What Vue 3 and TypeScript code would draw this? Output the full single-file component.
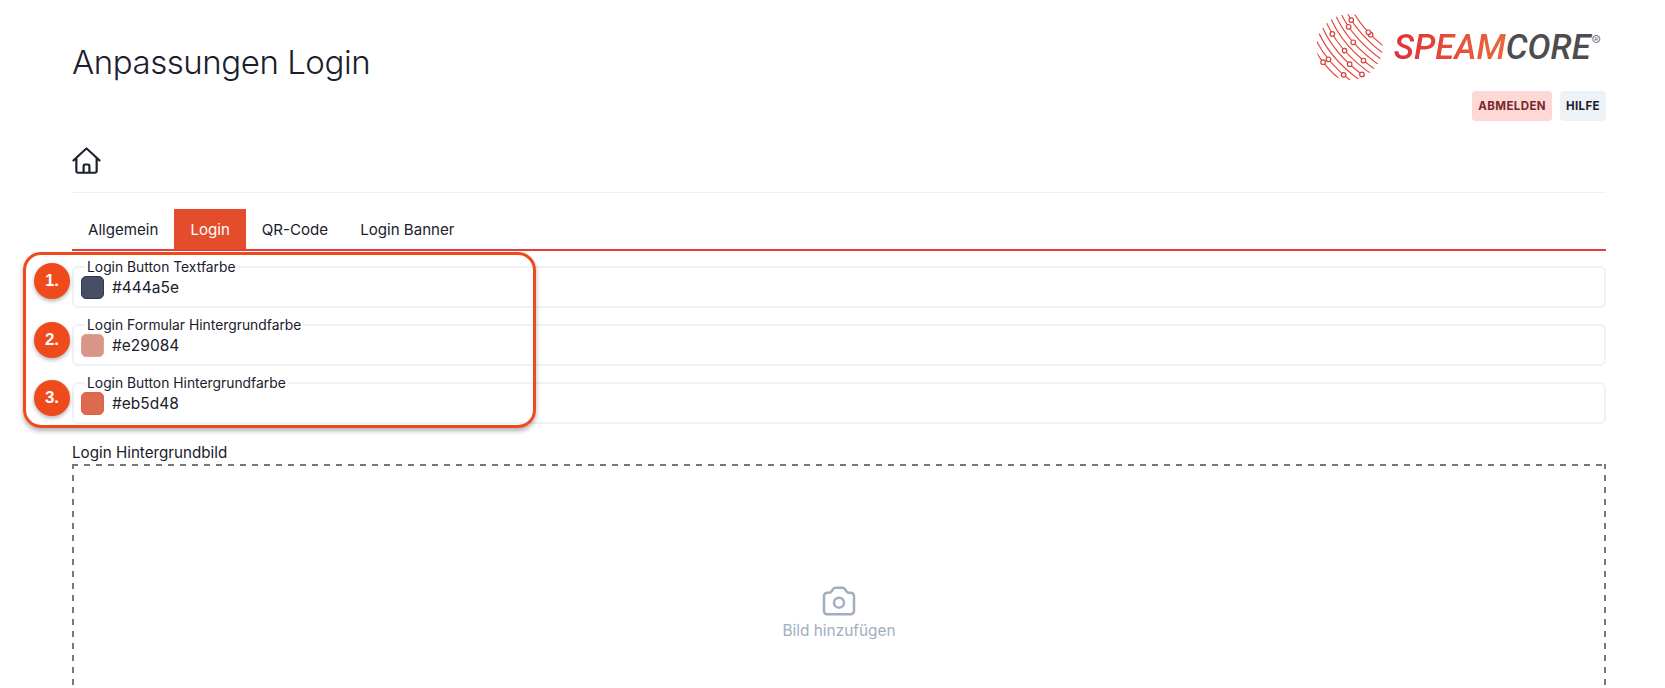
<template>
  <div class="page">
    <header class="top">
      <h1>Anpassungen Login</h1>
      <div class="top-right">
        <div class="logo">
          <svg class="globe" width="71" height="66" viewBox="0 0 71 66" fill="none">
            <defs>
              <clipPath id="globe-clip"><circle cx="35.5" cy="33" r="33" /></clipPath>
            </defs>
            <g clip-path="url(#globe-clip)" stroke="#e0493c" stroke-width="1.15">
              <path v-for="(line, i) in globeLines" :key="i" :d="toPath(line)" />
            </g>
            <circle
              v-for="(n, i) in globeNodes"
              :key="'n' + i"
              :cx="n[0]"
              :cy="n[1]"
              r="2.3"
              fill="#fff"
              stroke="#d9403a"
              stroke-width="1.2"
            />
          </svg>
          <span class="brand"><span class="brand-red">SPEAM</span><span class="brand-grey">CORE</span></span>
          <span class="reg">®</span>
        </div>
        <div class="actions">
          <a class="btn btn-red">ABMELDEN</a>
          <a class="btn btn-grey">HILFE</a>
        </div>
      </div>
    </header>

    <nav class="crumbs">
      <svg width="29" height="27" viewBox="2 2 20 20" preserveAspectRatio="none" fill="none" stroke="#1a202c" stroke-width="1.5" stroke-linecap="round" stroke-linejoin="round">
        <path d="M3 12l2-2m0 0l7-7 7 7M5 10v10a1 1 0 001 1h3m10-11l2 2m-2-2v10a1 1 0 01-1 1h-3m-6 0a1 1 0 001-1v-4a1 1 0 011-1h2a1 1 0 011 1v4a1 1 0 001 1m-6 0h6" />
      </svg>
    </nav>

    <div class="tabs">
      <div v-for="tab in tabs" :key="tab" class="tab" :class="{ active: tab === 'Login' }">{{ tab }}</div>
    </div>

    <div class="fields">
      <fieldset v-for="field in fields" :key="field.label" class="field">
        <legend>{{ field.label }}</legend>
        <div class="color-row">
          <span class="swatch" :style="{ backgroundColor: field.swatch, borderColor: field.edge }"></span>
          <span class="hex">{{ field.value }}</span>
        </div>
      </fieldset>

      <div class="callout"></div>
      <span v-for="(field, i) in fields" :key="'b' + i" class="badge" :class="'badge-' + (i + 1)">{{ i + 1 }}.</span>
    </div>

    <div class="upload-label">Login Hintergrundbild</div>
    <div class="upload">
      <svg width="40" height="40" viewBox="0 0 24 24" fill="none" stroke="#a0aec0" stroke-width="1.5" stroke-linecap="round" stroke-linejoin="round">
        <path d="M3 9a2 2 0 012-2h.93a2 2 0 001.664-.89l.812-1.22A2 2 0 0110.07 4h3.86a2 2 0 011.664.89l.812 1.22A2 2 0 0018.07 7H19a2 2 0 012 2v9a2 2 0 01-2 2H5a2 2 0 01-2-2V9z" />
        <path d="M15 13a3 3 0 11-6 0 3 3 0 016 0z" />
      </svg>
      <span class="upload-text">Bild hinzufügen</span>
    </div>
  </div>
</template>

<script setup lang="ts">
const tabs = ['Allgemein', 'Login', 'QR-Code', 'Login Banner']

const fields = [
  { label: 'Login Button Textfarbe', value: '#444a5e', swatch: '#484e63', edge: '#2f3654' },
  { label: 'Login Formular Hintergrundfarbe', value: '#e29084', swatch: '#d99686', edge: '#e0a294' },
  { label: 'Login Button Hintergrundfarbe', value: '#eb5d48', swatch: '#dc6a50', edge: '#e8603c' }
]

// parallel curves of the globe, clipped to a circle
const globeLines = Array.from({ length: 11 }, (_, i) => {
  const o = -28 + i * 6
  const dx = o * 0.72
  const dy = o * -0.69
  return [8 + dx, 2 + dy, 20 + dx, 38 + dy, 60 + dx, 64 + dy]
})

const toPath = (l: number[]) => `M${l[0]} ${l[1]}Q${l[2]} ${l[3]} ${l[4]} ${l[5]}`

// move a node onto the closest curve so it sits on a line
const snap = (x: number, y: number) => {
  let best = [x, y]
  let bestDist = Infinity
  for (const l of globeLines) {
    for (let t = 0; t <= 1; t += 0.02) {
      const u = 1 - t
      const px = u * u * l[0] + 2 * u * t * l[2] + t * t * l[4]
      const py = u * u * l[1] + 2 * u * t * l[3] + t * t * l[5]
      const dist = (px - x) ** 2 + (py - y) ** 2
      if (dist < bestDist) {
        bestDist = dist
        best = [px, py]
      }
    }
  }
  return best
}

const globeNodes = [
  [39, 5], [34, 14], [63, 15], [53, 20], [19, 20], [40, 27],
  [30, 38], [51, 44], [35, 50], [17, 44], [7, 49], [31, 60], [48, 59]
].map(n => snap(n[0], n[1]))
</script>

<style scoped>
.page {
  height: 688px;
  overflow: hidden;
  box-sizing: border-box;
  padding: 14px 59px 0 72px;
  background: #fff;
  color: #1a202c;
  font-family: Inter, "Liberation Sans", sans-serif;
}

.top {
  display: flex;
  justify-content: space-between;
  align-items: flex-start;
}

h1 {
  margin: 28px 0 0;
  font-size: 33px;
  line-height: 40px;
  font-weight: 300;
  letter-spacing: -0.45px;
}

.top-right {
  display: flex;
  flex-direction: column;
  align-items: flex-end;
  gap: 11px;
}

.logo {
  display: flex;
  align-items: center;
  height: 66px;
  margin-right: 5px;
}

.brand {
  margin-left: 9px;
  font-family: Roboto, sans-serif;
  font-size: 34.5px;
  font-weight: 500;
  font-style: italic;
  line-height: 1;
}

.brand-red {
  background: linear-gradient(90deg, #df3038, #e8683c);
  -webkit-background-clip: text;
  background-clip: text;
  color: transparent;
}

.brand-grey {
  color: #4d4d4f;
}

.reg {
  align-self: flex-start;
  margin: 19px 0 0 1px;
  font-size: 14px;
  line-height: 16px;
  color: #777;
}

.actions {
  display: flex;
  gap: 8px;
}

.btn {
  display: flex;
  align-items: center;
  height: 30px;
  padding: 0 6px;
  border-radius: 4px;
  font-size: 11.5px;
  font-weight: 700;
  letter-spacing: 0.4px;
}

.btn-red {
  background: #fed7d7;
  color: #742a2a;
}

.btn-grey {
  background: #edf2f7;
  color: #1a202c;
}

.crumbs {
  display: flex;
  margin-top: 26px;
  padding-bottom: 18px;
  border-bottom: 1px solid #edf2f7;
}

.tabs {
  display: flex;
  margin-top: 16px;
  border-bottom: 2px solid #e53e3e;
}

.tab {
  display: flex;
  align-items: center;
  height: 40px;
  padding: 0 16px;
  font-size: 15.1px;
}

.tab.active {
  background: #e34d2b;
  color: #fff;
}

.fields {
  position: relative;
  display: flex;
  flex-direction: column;
  gap: 10px;
  margin-top: 9px;
}

.field {
  margin: 0;
  padding: 2px 8px 7px;
  min-width: 0;
  border: 2px solid #edf2f7;
  border-radius: 6px;
}

legend {
  margin-left: 3px;
  padding: 0 2px;
  font-size: 13.85px;
  line-height: 14px;
}

.color-row {
  display: flex;
  align-items: center;
  gap: 8px;
  margin-left: -1px;
}

.swatch {
  width: 23px;
  height: 23px;
  box-sizing: border-box;
  border: 1px solid;
  border-radius: 5px;
}

.hex {
  font-size: 15.5px;
}

.callout {
  position: absolute;
  left: -49px;
  top: -8px;
  width: 513px;
  height: 176px;
  box-sizing: border-box;
  border: 3px solid #ee4a1c;
  border-radius: 18px;
  box-shadow: 0 3px 5px rgba(0, 0, 0, 0.3);
}

.badge {
  position: absolute;
  left: -38px;
  display: flex;
  align-items: center;
  justify-content: center;
  width: 36px;
  height: 36px;
  border-radius: 50%;
  background: #ee4a1c;
  box-shadow: 0 2px 4px rgba(0, 0, 0, 0.3);
  color: #fff;
  font-family: "Liberation Sans", sans-serif;
  font-size: 17px;
  font-weight: 700;
}

.badge-1 { top: 3px; }
.badge-2 { top: 62px; }
.badge-3 { top: 120px; }

.upload-label {
  margin-top: 19px;
  font-size: 15.2px;
  line-height: 20px;
}

.upload {
  display: flex;
  flex-direction: column;
  align-items: center;
  justify-content: center;
  height: 293px;
  margin-top: 1px;
  /* longer dashes than a dashed border draws */
  background:
    repeating-linear-gradient(90deg, #777 0 6px, transparent 6px 12px) top / 100% 2px no-repeat,
    repeating-linear-gradient(0deg, #777 0 6px, transparent 6px 12px) left / 2px 100% no-repeat,
    repeating-linear-gradient(0deg, #777 0 6px, transparent 6px 12px) right / 2px 100% no-repeat;
}

.upload-text {
  font-size: 15.4px;
  color: #a0aec0;
}
</style>

<style>
html,
body {
  margin: 0;
  overflow: hidden;
}
</style>
